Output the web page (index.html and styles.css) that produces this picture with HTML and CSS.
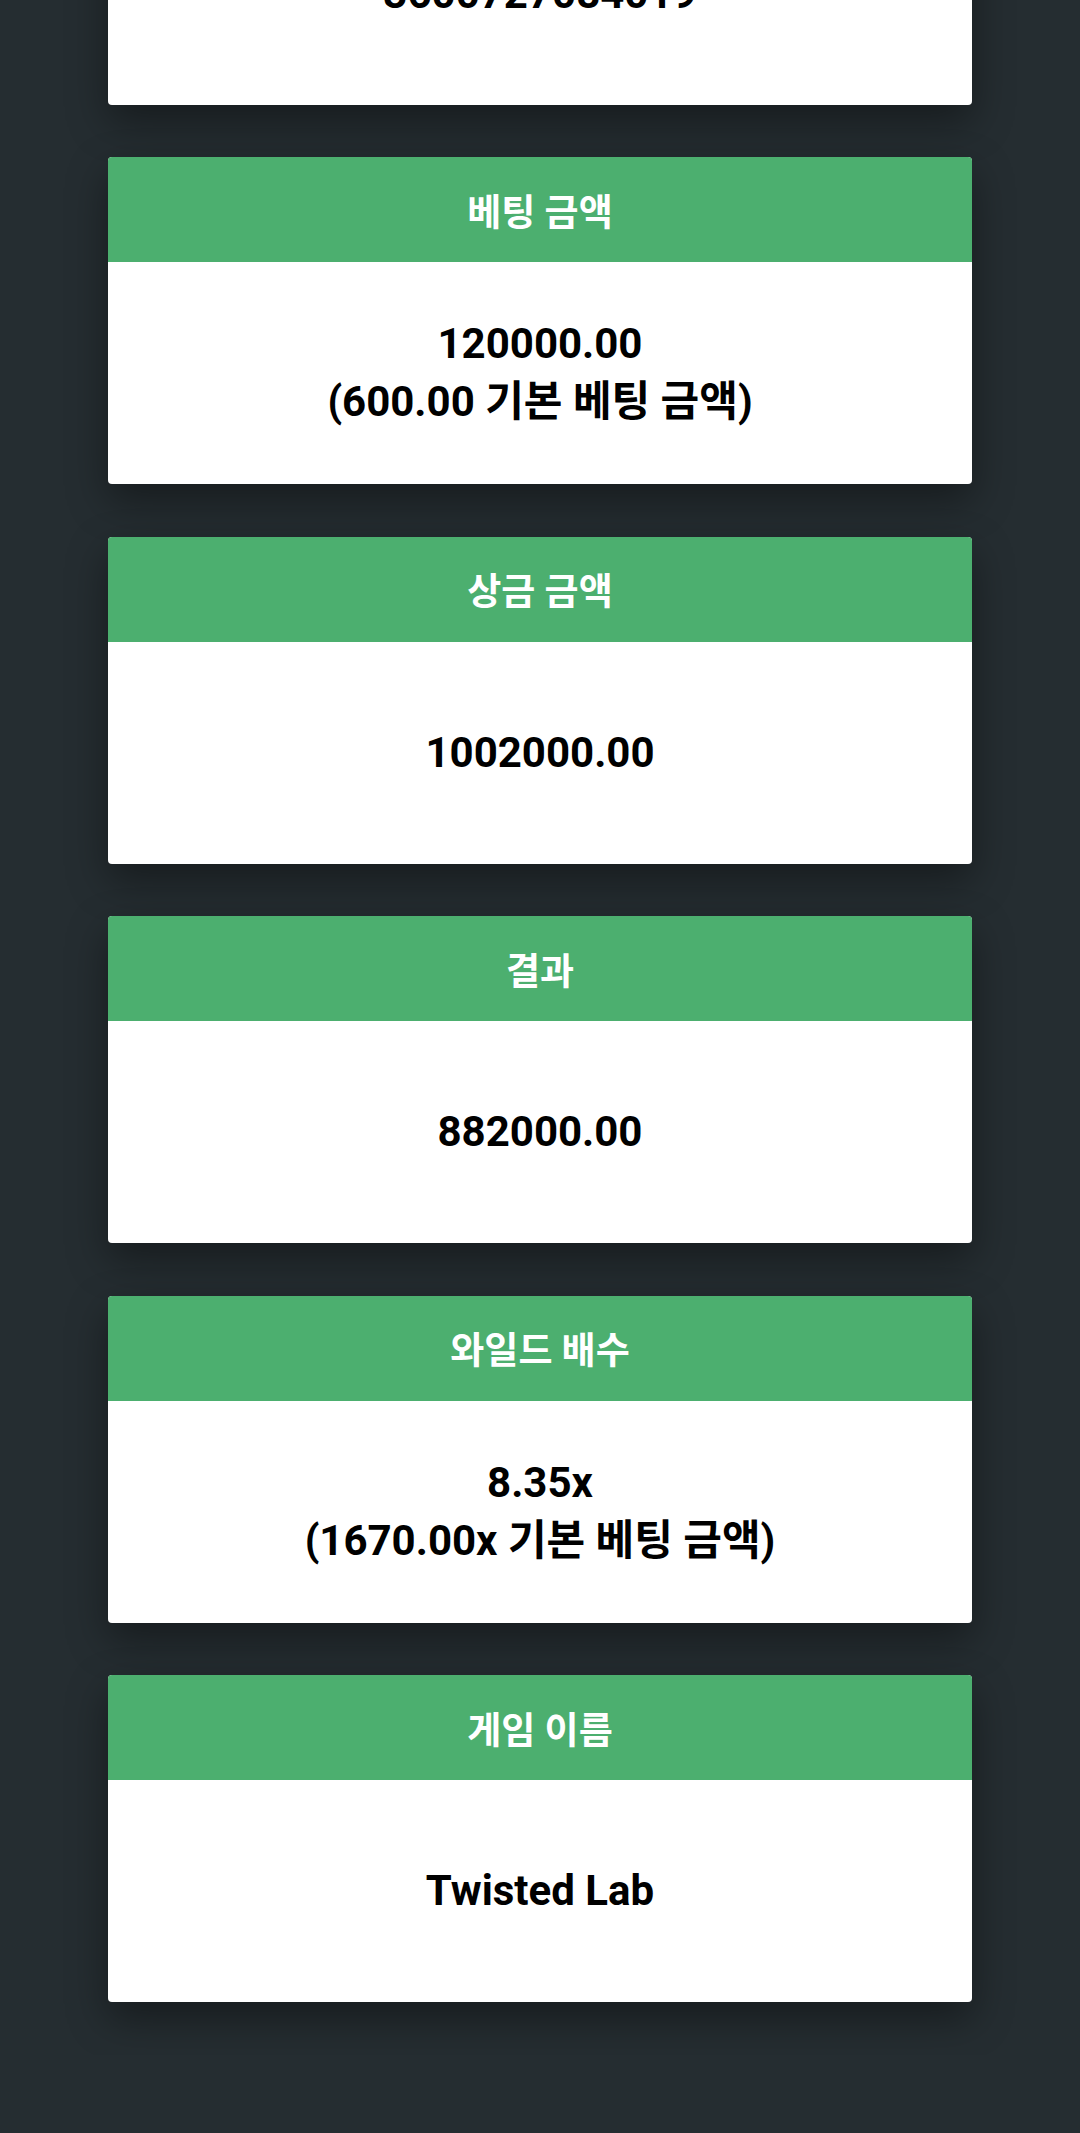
FILE: index.html
```html
<!DOCTYPE html>
<html lang="ko">
<head>
    <meta charset="UTF-8">
    <meta name="viewport" content="width=device-width, initial-scale=1.0">
    <title>베팅 상세</title>
    <link rel="stylesheet" href="styles.css">
</head>
<body>
    <div class="details">
        <div class="card">
            <div class="card-title">베팅 ID</div>
            <div class="card-value">
                <div>3600727084019</div>
            </div>
        </div>

        <div class="card">
            <div class="card-title">베팅 금액</div>
            <div class="card-value">
                <div>120000.00</div>
                <div>(600.00 기본 베팅 금액)</div>
            </div>
        </div>

        <div class="card">
            <div class="card-title">상금 금액</div>
            <div class="card-value">
                <div>1002000.00</div>
            </div>
        </div>

        <div class="card">
            <div class="card-title">결과</div>
            <div class="card-value">
                <div>882000.00</div>
            </div>
        </div>

        <div class="card">
            <div class="card-title">와일드 배수</div>
            <div class="card-value">
                <div>8.35x</div>
                <div>(1670.00x 기본 베팅 금액)</div>
            </div>
        </div>

        <div class="card">
            <div class="card-title">게임 이름</div>
            <div class="card-value">
                <div>Twisted Lab</div>
            </div>
        </div>
    </div>
</body>
</html>
```

FILE: styles.css
```css
body {
    margin: 0;
    padding: 0;
    background: #252d31;
    font-family: Roboto, "Noto Sans CJK KR", sans-serif;
    color: #000;
}

/* the page is scrolled: the first card sits half above the top edge */
.details {
    margin: -222.5px 108px 0;
}

.card {
    background: #fff;
    border-radius: 4px;
    overflow: hidden;
    margin-bottom: 52.5px;
    box-shadow: 0 16px 40px rgba(0, 0, 0, 0.4);
}

.card-title {
    height: 105px;
    display: flex;
    align-items: center;
    justify-content: center;
    background: #4caf6f;
    color: #fff;
    font-size: 37px;
    font-weight: 700;
}

.card-value {
    height: 222px;
    display: flex;
    flex-direction: column;
    align-items: center;
    justify-content: center;
    text-align: center;
    font-size: 42px;
    font-weight: 700;
    line-height: 58px;
}
```
